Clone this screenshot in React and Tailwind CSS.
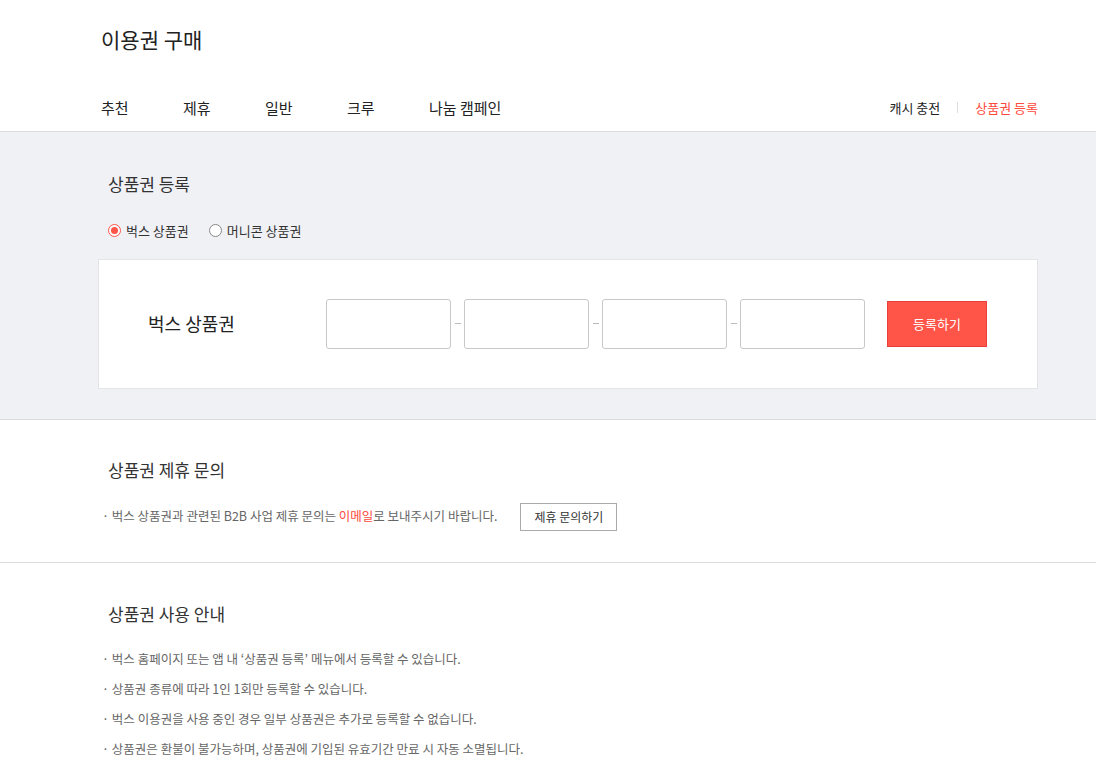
import { useState } from "react";

const tabs = ["추천", "제휴", "일반", "크루", "나눔 캠페인"];

const notices = [
    "벅스 홈페이지 또는 앱 내 ‘상품권 등록’ 메뉴에서 등록할 수 있습니다.",
    "상품권 종류에 따라 1인 1회만 등록할 수 있습니다.",
    "벅스 이용권을 사용 중인 경우 일부 상품권은 추가로 등록할 수 없습니다.",
    "상품권은 환불이 불가능하며, 상품권에 기입된 유효기간 만료 시 자동 소멸됩니다.",
];

function Radio({ checked, label, onClick }) {
    return (
        <label className="flex items-center gap-[5px] cursor-pointer" onClick={onClick}>
            <span
                className={
                    checked
                        ? "w-[13px] h-[13px] rounded-full border border-[#ff5549] flex items-center justify-center bg-white"
                        : "w-[13px] h-[13px] rounded-full border border-[#888] bg-white"
                }
            >
                {checked && <span className="w-[7px] h-[7px] rounded-full bg-[#ff5549]" />}
            </span>
            <span className="text-[13px] text-[#333]">{label}</span>
        </label>
    );
}

export default function App() {
    const [type, setType] = useState("bugs");
    const [codes, setCodes] = useState(["", "", "", ""]);

    const changeCode = (i, v) => {
        setCodes(codes.map((c, idx) => (idx === i ? v : c)));
    };

    return (
        <div className="min-h-screen bg-white text-[#333]" style={{ fontFamily: '"Noto Sans CJK KR", "Noto Sans", sans-serif' }}>
            {/* HEADER */}
            <div className="border-b border-[#dcdcdc]">
                <div className="ml-[98px] w-[940px]">
                    <h1 className="pt-[23px] pl-[3px] text-[21px] leading-[32px] text-[#222]">이용권 구매</h1>
                    <div className="flex items-center justify-between mt-[39px] h-[37px] pb-[10px]">
                        <div className="flex pl-[3px]">
                            {tabs.map((t) => (
                                <span key={t} className="w-[82px] text-[15px] text-[#222] leading-[20px]">{t}</span>
                            ))}
                        </div>
                        <div className="flex items-center text-[13px] leading-[20px]">
                            <span className="text-[#222]">캐시 충전</span>
                            <span className="mx-[17px] w-px h-[11px] bg-[#ddd]" />
                            <span className="text-[#ff4a3d]">상품권 등록</span>
                        </div>
                    </div>
                </div>
            </div>

            {/* REGISTER */}
            <div className="bg-[#f0f1f5] border-b border-[#dcdcdc]">
                <div className="ml-[98px] w-[940px] pt-[40px] pb-[30px]">
                    <h2 className="pl-[10px] text-[17px] leading-[24px] text-[#333]">상품권 등록</h2>
                    <div className="flex gap-[20px] pl-[10px] mt-[25px]">
                        <Radio checked={type === "bugs"} label="벅스 상품권" onClick={() => setType("bugs")} />
                        <Radio checked={type === "money"} label="머니콘 상품권" onClick={() => setType("money")} />
                    </div>
                    <div className="mt-[18px] h-[130px] bg-white border border-[#e4e4e4] flex items-center">
                        <span className="w-[227px] pl-[49px] text-[18px] text-[#222]">벅스 상품권</span>
                        <div className="flex items-center">
                            {codes.map((c, i) => (
                                <div key={i} className="flex items-center">
                                    {i > 0 && <span className="w-[13px] flex justify-center"><span className="w-[6px] h-px bg-[#bbb]" /></span>}
                                    <input
                                        value={c}
                                        onChange={(e) => changeCode(i, e.target.value)}
                                        className="w-[125px] h-[50px] border border-[#c8c8c8] rounded-[3px] bg-white outline-none px-2"
                                    />
                                </div>
                            ))}
                        </div>
                        <button className="ml-[22px] w-[100px] h-[46px] bg-[#ff5549] border border-[#e8403a] text-white text-[13px]">
                            등록하기
                        </button>
                    </div>
                </div>
            </div>

            {/* PARTNERSHIP */}
            <div className="border-b border-[#dcdcdc]">
                <div className="ml-[98px] w-[940px] pt-[38px] pb-[31px]">
                    <h2 className="pl-[10px] text-[17px] leading-[24px] text-[#333]">상품권 제휴 문의</h2>
                    <div className="flex items-center mt-[21px] pl-[4px]">
                        <span className="text-[12.5px] text-[#666]">
                            · 벅스 상품권과 관련된 B2B 사업 제휴 문의는 <span className="text-[#ff4a3d]">이메일</span>로 보내주시기 바랍니다.
                        </span>
                        <button className="ml-[23px] w-[97px] h-[28px] border border-[#aaa] bg-white text-[12px] text-[#333]">
                            제휴 문의하기
                        </button>
                    </div>
                </div>
            </div>

            {/* NOTICE */}
            <div className="ml-[98px] w-[940px] pt-[39px] pb-[20px]">
                <h2 className="pl-[10px] text-[17px] leading-[24px] text-[#333]">상품권 사용 안내</h2>
                <ul className="mt-[18px] pl-[4px]">
                    {notices.map((n) => (
                        <li key={n} className="text-[12.5px] leading-[30px] text-[#666]">· {n}</li>
                    ))}
                </ul>
            </div>
        </div>
    );
}
